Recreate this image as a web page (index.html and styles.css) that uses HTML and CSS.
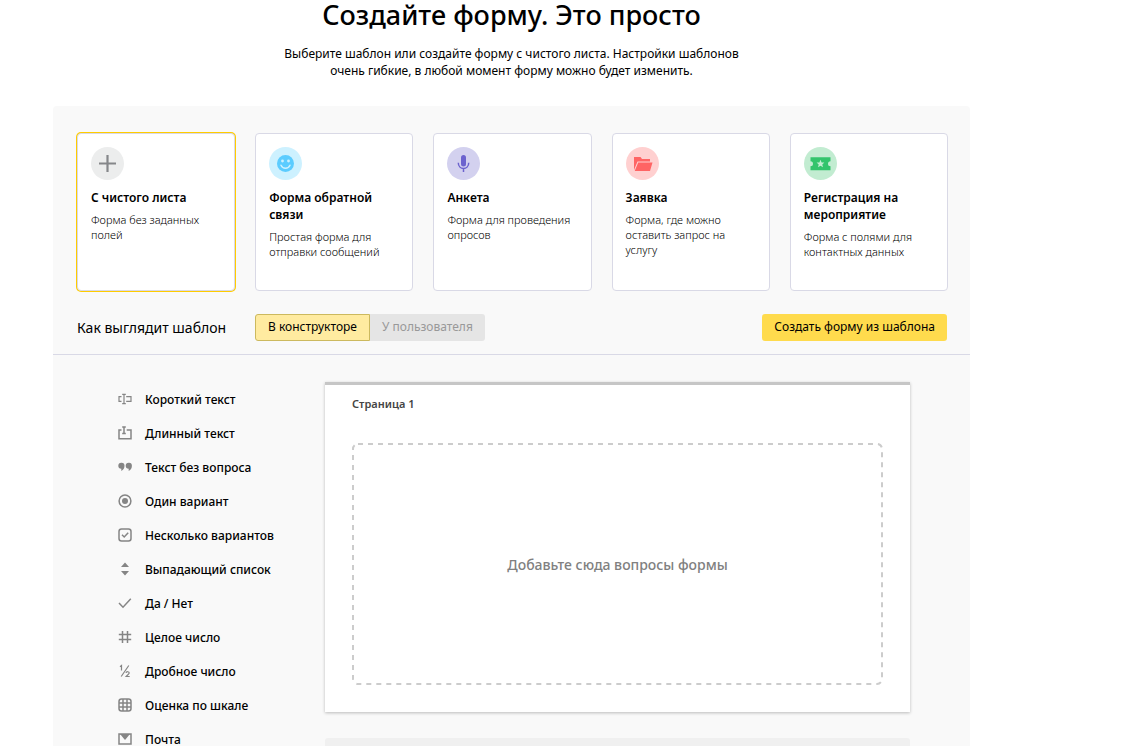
FILE: index.html
```html
<!DOCTYPE html>
<html lang="ru">
<head>
<meta charset="utf-8">
<meta name="viewport" content="width=device-width, initial-scale=1">
<title>Создайте форму</title>
<link rel="stylesheet" href="styles.css">
</head>
<body>
<main class="page">
  <header class="intro">
    <h1 class="intro-title">Создайте форму. Это просто</h1>
    <p class="intro-text">Выберите шаблон или создайте форму с чистого листа. Настройки шаблонов очень гибкие, в любой момент форму можно будет изменить.</p>
  </header>

  <section class="panel">
    <div class="templates">
      <button type="button" class="card card-selected" aria-pressed="true">
        <svg class="card-icon" viewBox="0 0 33 33" aria-hidden="true"><circle cx="16.500" cy="16.500" r="16.500" fill="#eceded"/><path d="M16.500 8v17M8 16.500h17" stroke="#85878a" stroke-width="2.200"/></svg>
        <span class="card-title">С чистого листа</span>
        <span class="card-text">Форма без заданных полей</span>
      </button>
      <button type="button" class="card" aria-pressed="false">
        <svg class="card-icon" viewBox="0 0 33 33" aria-hidden="true"><circle cx="16.500" cy="16.500" r="16.500" fill="#cdf1ff"/><circle cx="16.500" cy="16.500" r="8.500" fill="#5bccff"/><circle cx="13.500" cy="14" r="1.400" fill="#cdf1ff"/><circle cx="19.500" cy="14" r="1.400" fill="#cdf1ff"/><path d="M12 18.200c1.700 4 7.300 4 9 0" fill="none" stroke="#cdf1ff" stroke-width="1.500" stroke-linecap="round"/></svg>
        <span class="card-title">Форма обратной связи</span>
        <span class="card-text">Простая форма для отправки сообщений</span>
      </button>
      <button type="button" class="card" aria-pressed="false">
        <svg class="card-icon" viewBox="0 0 33 33" aria-hidden="true"><circle cx="16.500" cy="16.500" r="16.500" fill="#d3d1ef"/><rect x="14" y="8" width="5" height="11.500" rx="2.500" fill="#6c63ce"/><path d="M11.300 15.800c0 7.600 10.400 7.600 10.400 0M16.500 21.500V25" fill="none" stroke="#6c63ce" stroke-width="1.500"/></svg>
        <span class="card-title">Анкета</span>
        <span class="card-text">Форма для проведения опросов</span>
      </button>
      <button type="button" class="card" aria-pressed="false">
        <svg class="card-icon" viewBox="0 0 33 33" aria-hidden="true"><circle cx="16.500" cy="16.500" r="16.500" fill="#ffd0d0"/><path d="M8 10h6.500l1.500 2h8v2.500H11.500L8 23zM12.200 15.500h14.300L24 24H8.700z" fill="#ff6464"/></svg>
        <span class="card-title">Заявка</span>
        <span class="card-text">Форма, где можно оставить запрос на услугу</span>
      </button>
      <button type="button" class="card" aria-pressed="false">
        <svg class="card-icon" viewBox="0 0 33 33" aria-hidden="true"><circle cx="16.500" cy="16.500" r="16.500" fill="#c2ecd1"/><path d="M6.500 10.200h20v4a2.500 2.500 0 0 0 0 5v4h-20v-4a2.500 2.500 0 0 0 0-5z" fill="#33c46c"/><path d="M16.500 12.800l1.100 2.600 2.800.200-2.100 1.800.700 2.800-2.500-1.500-2.500 1.500.700-2.800-2.100-1.800 2.800-.200z" fill="#c2ecd1"/></svg>
        <span class="card-title">Регистрация на мероприятие</span>
        <span class="card-text">Форма с полями для контактных данных</span>
      </button>
    </div>

    <div class="toolbar">
      <span class="toolbar-label" id="view-label">Как выглядит шаблон</span>
      <div class="switch" role="group" aria-labelledby="view-label">
        <button type="button" class="switch-item switch-active" aria-pressed="true">В конструкторе</button>
        <button type="button" class="switch-item" aria-pressed="false">У пользователя</button>
      </div>
      <button type="button" class="create">Создать форму из шаблона</button>
    </div>

    <div class="preview">
      <ul class="fields">
        <li class="field"><svg class="field-icon" viewBox="0 0 14 14" aria-hidden="true"><path class="thin" d="M3.500 4.700H1v4.600h2.500M8.200 4.700H13v4.600H8.200M4.200 2.400h3.600M4.200 11.600h3.600M6 2.400v9.200"/></svg>Короткий текст</li>
        <li class="field"><svg class="field-icon" viewBox="0 0 14 14" aria-hidden="true"><path d="M3.500 4H1v8.800h12V4H8.700M4.200 1h3.600M4.200 7.500h3.600M6 1v6.500"/></svg>Длинный текст</li>
        <li class="field"><svg class="field-icon" viewBox="0 0 14 14" aria-hidden="true"><g class="solid"><path d="M3.300 2.800a3 3 0 0 1 3.200 3c0 2.500-1.200 4.300-3.200 5.200V8.800a3 3 0 1 1 0-6z"/><path d="M10.700 2.800a3 3 0 0 1 3.200 3c0 2.500-1.200 4.300-3.200 5.200V8.800a3 3 0 1 1 0-6z"/></g></svg>Текст без вопроса</li>
        <li class="field"><svg class="field-icon" viewBox="0 0 14 14" aria-hidden="true"><circle cx="7" cy="7" r="5.900"/><circle class="solid" cx="7" cy="7" r="3"/></svg>Один вариант</li>
        <li class="field"><svg class="field-icon" viewBox="0 0 14 14" aria-hidden="true"><rect x="1" y="1" width="12" height="12" rx="2.500"/><path d="M4 6.800l2.200 2.200 4-4.300"/></svg>Несколько вариантов</li>
        <li class="field"><svg class="field-icon" viewBox="0 0 14 14" aria-hidden="true"><path class="solid" d="M3 5L7 .500 11 5zM3 9l4 4.500L11 9z"/></svg>Выпадающий список</li>
        <li class="field"><svg class="field-icon" viewBox="0 0 14 14" aria-hidden="true"><path d="M1 7l4 4.200 7.800-8.400"/></svg>Да / Нет</li>
        <li class="field"><svg class="field-icon" viewBox="0 0 14 14" aria-hidden="true"><path d="M4.500 1v12M9.500 1v12M.800 4.500h12.400M.800 9.500h12.400"/></svg>Целое число</li>
        <li class="field"><svg class="field-icon" viewBox="0 0 14 14" aria-hidden="true"><path class="thin" d="M2 2.800L3.500 1.500V6.500M10.800 1.500L3.200 12.500M8 9c.300-1.800 3.200-1.600 3.200 0 0 1.200-2 2-3.200 3.500h3.700"/></svg>Дробное число</li>
        <li class="field"><svg class="field-icon" viewBox="0 0 14 14" aria-hidden="true"><rect x="1" y="1" width="12" height="12" rx="2.500"/><path d="M5 1v12M9 1v12M1 5h12M1 9h12"/></svg>Оценка по шкале</li>
        <li class="field"><svg class="field-icon" viewBox="0 0 14 14" aria-hidden="true"><rect x="1" y="2" width="12" height="10"/><path class="solid" d="M2 2h10L7 8z"/></svg>Почта</li>
      </ul>
      <div class="canvas">
        <section class="sheet">
          <h2 class="sheet-title">Страница 1</h2>
          <div class="drop">
            <svg class="drop-frame" aria-hidden="true"><rect class="drop-line" width="100%" height="100%" rx="5"/></svg>
            <span>Добавьте сюда вопросы формы</span>
          </div>
        </section>
        <div class="next-sheet"></div>
      </div>
    </div>
  </section>
</main>
</body>
</html>
```
FILE: styles.css
```css
* {
  box-sizing: border-box;
}

html {
  scrollbar-width: none;
}

body {
  margin: 0;
  background: #fff;
  color: #000;
  font-family: "Noto Sans", "Open Sans", sans-serif;
}

button {
  font-family: inherit;
  color: inherit;
  cursor: pointer;
}

.page {
  padding: 0 157px 0 53px;
}

.intro {
  padding-bottom: 27px;
  text-align: center;
}

.intro-title {
  margin: 0 0 15px;
  font-size: 27px;
  line-height: 30px;
  font-weight: 500;
}

.intro-text {
  max-width: 480px;
  margin: 0 auto;
  font-size: 12px;
  line-height: 17px;
}

.panel {
  border-radius: 4px 4px 0 0;
  background: #f9f9f9;
}

.templates {
  display: grid;
  grid-template-columns: repeat(5, 1fr);
  gap: 20px;
  padding: 27px 22px 0 24px;
}

.card {
  display: flex;
  flex-direction: column;
  align-items: flex-start;
  min-height: 158px;
  padding: 13px;
  border: 1px solid #d9d9e6;
  border-radius: 4px;
  background: #fff;
  text-align: left;
}

.card-selected {
  box-shadow: 0 0 0 1px #fc0;
}

.card-icon {
  width: 33px;
  height: 33px;
  margin-bottom: 9px;
}

.card-title {
  margin-bottom: 6px;
  font-size: 12px;
  line-height: 17px;
  font-weight: 600;
}

.card-text {
  font-size: 11px;
  line-height: 15px;
  font-weight: 300;
}

.toolbar {
  display: flex;
  align-items: center;
  padding: 23px 23px 13px 24px;
  border-bottom: 1px solid #d9d9e6;
}

.toolbar-label {
  width: 178px;
  font-size: 14px;
  line-height: 27px;
}

.switch {
  display: flex;
}

.switch-item {
  height: 27px;
  padding: 0 12px 2px;
  border: 0;
  border-radius: 0 3px 3px 0;
  background: #e5e5e5;
  color: #999;
  font-size: 12px;
}

.switch-active {
  border: 1px solid #ccb95e;
  border-radius: 3px 0 0 3px;
  background: #ffeba0;
  color: #000;
}

.create {
  height: 27px;
  margin-left: auto;
  padding: 0 12px 2px;
  border: 0;
  border-radius: 3px;
  background: #ffdb4d;
  font-size: 12px;
}

.preview {
  display: flex;
  padding: 27px 60px 0 65px;
}

.fields {
  flex: 0 0 207px;
  margin: 0;
  padding: 0;
  list-style: none;
}

.field {
  display: flex;
  align-items: center;
  gap: 13px;
  height: 34px;
  font-size: 12px;
  font-weight: 500;
}

.field-icon {
  width: 14px;
  height: 14px;
  fill: none;
  stroke: #858585;
  stroke-width: 1.5;
}

.solid {
  fill: #858585;
  stroke: none;
}

.thin {
  stroke-width: 1.2;
}

.canvas {
  flex: 1;
}

.sheet {
  padding: 10px 27px 27px;
  border-top: 3px solid #c6c6c6;
  background: #fff;
  box-shadow: 0 1px 3px rgba(0, 0, 0, 0.25);
}

.sheet-title {
  margin: 0 0 30px;
  color: #444;
  font-size: 11px;
  line-height: 18px;
  font-weight: 600;
}

.drop {
  position: relative;
  display: grid;
  place-items: center;
  height: 242px;
  color: #808080;
  font-size: 14px;
  font-weight: 500;
}

.drop-frame {
  position: absolute;
  inset: 1px;
  width: calc(100% - 2px);
  height: calc(100% - 2px);
  overflow: visible;
}

.drop-line {
  fill: none;
  stroke: #ccc;
  stroke-width: 2;
  stroke-dasharray: 5 5;
}

.next-sheet {
  height: 40px;
  margin-top: 26px;
  border-radius: 3px 3px 0 0;
  background: #f0f0f0;
}
```
